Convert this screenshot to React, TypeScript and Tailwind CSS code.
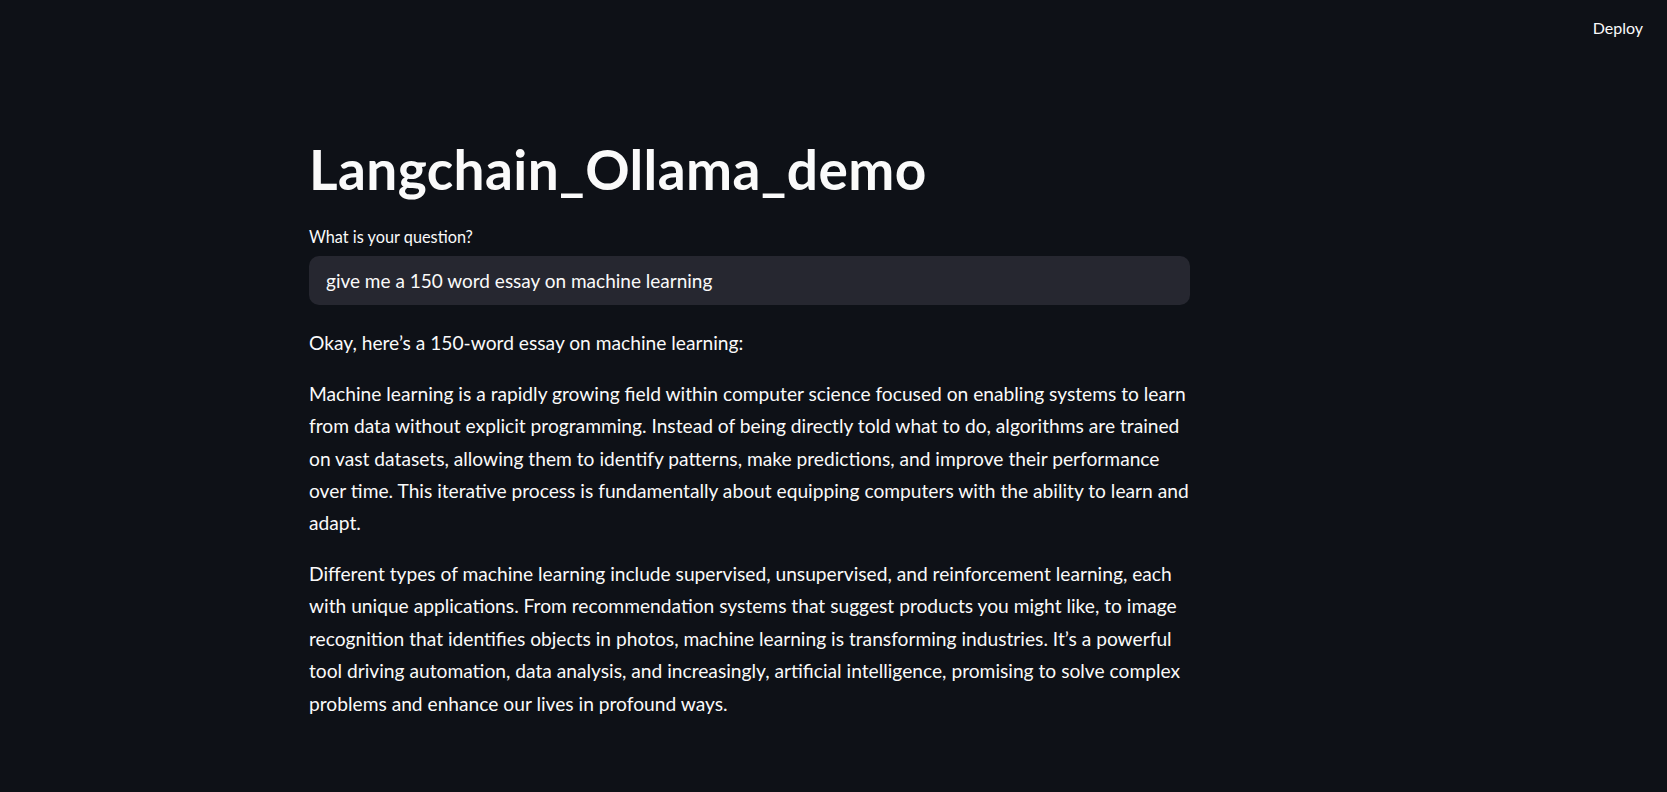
import { useState } from "react";

const paragraphs = [
  "Okay, here\u2019s a 150-word essay on machine learning:",
  "Machine learning is a rapidly growing field within computer science focused on enabling systems to learn from data without explicit programming. Instead of being directly told what to do, algorithms are trained on vast datasets, allowing them to identify patterns, make predictions, and improve their performance over time. This iterative process is fundamentally about equipping computers with the ability to learn and adapt.",
  "Different types of machine learning include supervised, unsupervised, and reinforcement learning, each with unique applications. From recommendation systems that suggest products you might like, to image recognition that identifies objects in photos, machine learning is transforming industries. It\u2019s a powerful tool driving automation, data analysis, and increasingly, artificial intelligence, promising to solve complex problems and enhance our lives in profound ways.",
];

const App = () => {
  const [question, setQuestion] = useState("give me a 150 word essay on machine learning");

  return (
    <div className="min-h-screen w-full bg-[#0e1117] text-[#fafafa] font-['Lato','Liberation_Sans',sans-serif]">
      <header className="h-[56px] flex justify-end items-center pr-[24px]">
        <button className="text-[16px] text-[#fafafa]">Deploy</button>
      </header>
      <main className="w-[881px] ml-[309px] pt-[80px] pb-[60px]">
        <h1 className="text-[55px] font-bold leading-[1.2] tracking-[0.4px] mb-[23px]">Langchain_Ollama_demo</h1>
        <label className="block text-[16.3px] mb-[7px]">What is your question?</label>
        <input
          value={question}
          onChange={(e) => setQuestion(e.target.value)}
          className="w-full h-[49px] rounded-[10px] bg-[#262730] px-[17px] text-[19px] outline-none"
        />
        <div className="mt-[22px] flex flex-col gap-[18px] text-[19.2px] leading-[32.4px]">
          {paragraphs.map((p, i) => (
            <p key={i}>{p}</p>
          ))}
        </div>
      </main>
    </div>
  );
};

export default App;
